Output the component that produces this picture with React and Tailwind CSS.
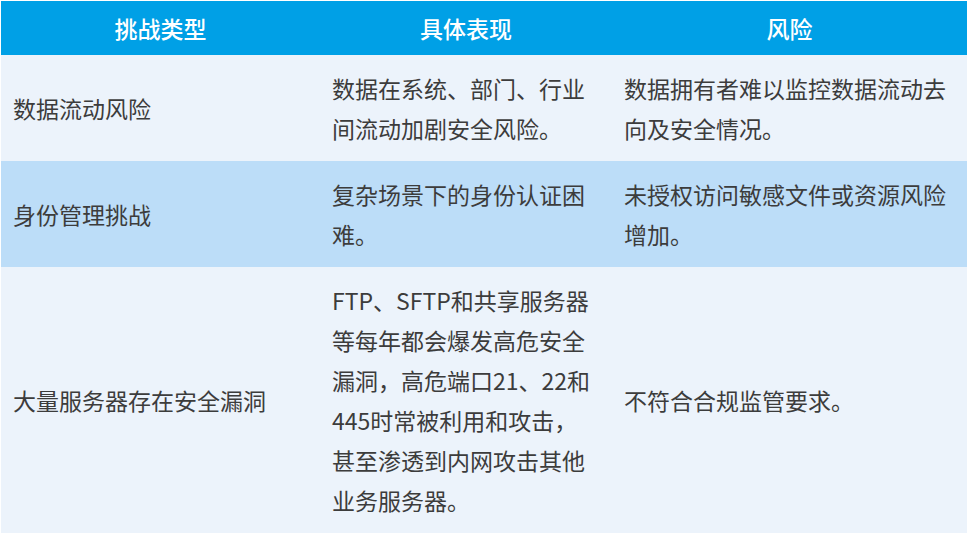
const ROWS = [
  {
    type: '数据流动风险',
    detail: '数据在系统、部门、行业间流动加剧安全风险。',
    risk: '数据拥有者难以监控数据流动去向及安全情况。',
    bg: 'bg-[#ecf3fb]',
  },
  {
    type: '身份管理挑战',
    detail: '复杂场景下的身份认证困难。',
    risk: '未授权访问敏感文件或资源风险增加。',
    bg: 'bg-[#bcddf8]',
  },
  {
    type: '大量服务器存在安全漏洞',
    detail: 'FTP、SFTP和共享服务器等每年都会爆发高危安全漏洞，高危端口21、22和445时常被利用和攻击，甚至渗透到内网攻击其他业务服务器。',
    risk: '不符合合规监管要求。',
    bg: 'bg-[#ecf3fb]',
  },
];

export default function App() {
  return (
    <div className="h-[535px] w-[968px] bg-white pl-px pt-px font-['Microsoft_YaHei','Noto_Sans_CJK_SC',sans-serif]">
      <table className="w-[966px] table-fixed border-collapse text-[23px] leading-[40px] text-[#3c3c3c]">
        <colgroup>
          <col className="w-[319px]" />
          <col className="w-[292px]" />
          <col className="w-[355px]" />
        </colgroup>
        <thead>
          <tr className="h-[54px] bg-[#00a0e6] text-white">
            <th className="px-3 text-center font-medium">挑战类型</th>
            <th className="px-3 text-center font-medium">具体表现</th>
            <th className="px-3 text-center font-medium">风险</th>
          </tr>
        </thead>
        <tbody>
          {ROWS.map((r) => (
            <tr key={r.type} className={r.bg}>
              <td className="px-3 py-[13px] align-middle">{r.type}</td>
              <td className="px-3 py-[13px] align-middle">{r.detail}</td>
              <td className="px-3 py-[13px] align-middle">{r.risk}</td>
            </tr>
          ))}
        </tbody>
      </table>
    </div>
  );
}
